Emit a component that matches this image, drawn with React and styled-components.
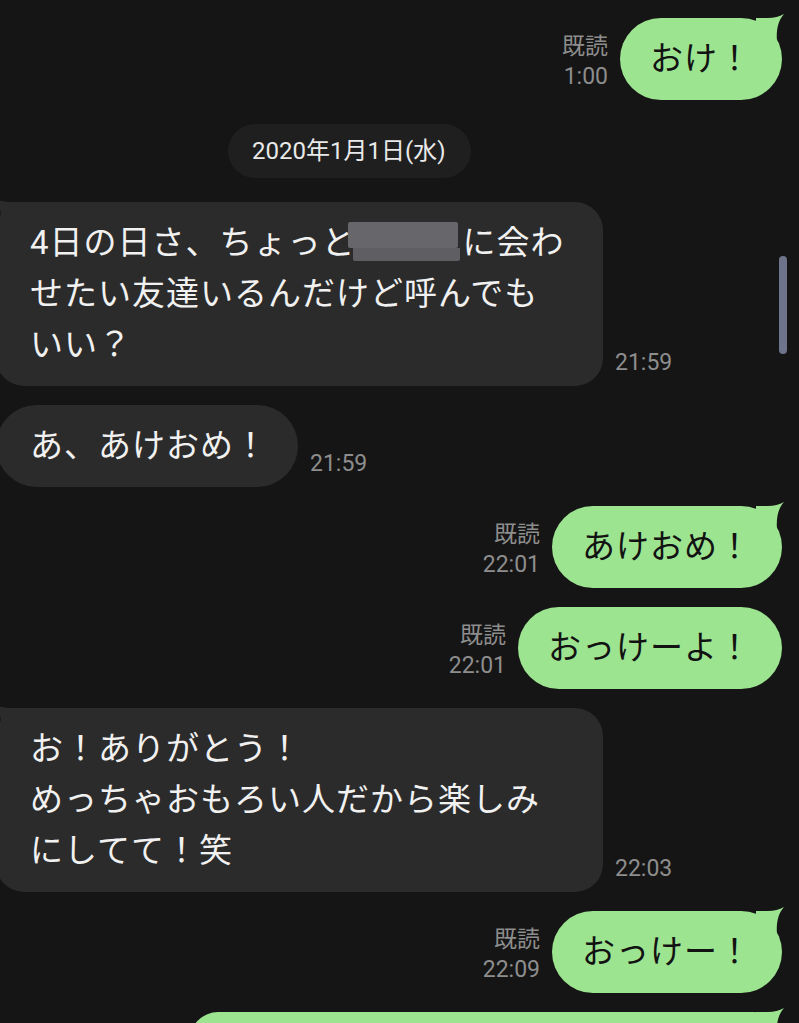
import React from 'react';
import styled, { createGlobalStyle, css } from 'styled-components';

const Global = createGlobalStyle`
  html, body { margin: 0; padding: 0; background: #151515; }
  body { font-family: Roboto, "Noto Sans CJK JP", sans-serif; }
`;

const Screen = styled.div`
  position: relative;
  width: 799px;
  height: 1023px;
  overflow: hidden;
  background: #151515;
  box-sizing: border-box;
  padding: 18px 17px 0 0;
  display: flex;
  flex-direction: column;
  gap: 19px;
`;

const Row = styled.div`
  display: flex;
  align-items: flex-end;
  gap: 12px;
  justify-content: ${p => (p.$mine ? 'flex-end' : 'flex-start')};
`;

const Bubble = styled.div`
  position: relative;
  flex: none;
  box-sizing: border-box;
  padding: 15px 30px 16px;
  border-radius: ${p => (p.$multi ? '28px' : '41px')};
  background: ${p => (p.$mine ? '#9de491' : '#2b2b2b')};
  color: ${p => (p.$mine ? '#121212' : '#f1f1f1')};
  font-family: Roboto, "Noto Sans CJK JP", sans-serif;
  font-size: 33px;
  line-height: 51px;
  letter-spacing: 1px;
  white-space: nowrap;
  ${p => !p.$mine && css`
    margin-left: -4px;
    padding-left: 34px;
  `}
  ${p => p.$width && css`
    width: ${p.$width}px;
  `}
`;

const Tail = styled.svg`
  position: absolute;
  top: -4px;
  width: 28px;
  height: 30px;
  ${p => (p.$mine
    ? css`right: -2px;`
    : css`left: -2px; transform: scaleX(-1);`)}
`;

const Meta = styled.div`
  display: flex;
  flex-direction: column;
  align-items: ${p => (p.$mine ? 'flex-end' : 'flex-start')};
  margin-bottom: 8px;
  font-family: Roboto, "Noto Sans CJK JP", sans-serif;
  font-size: 23px;
  line-height: 30px;
  color: #8d8d8d;
  white-space: nowrap;
`;

const DateRow = styled.div`
  display: flex;
  padding-left: 228px;
  margin: 5px 0;
`;

const DatePill = styled.div`
  height: 54px;
  padding: 0 25px 0 24px;
  border-radius: 27px;
  background: #1f1f1f;
  color: #e9e9e9;
  font-family: Roboto, "Noto Sans CJK JP", sans-serif;
  font-size: 24px;
  line-height: 54px;
`;

const Redact = styled.span`
  display: inline-flex;
  flex-direction: column;
  vertical-align: top;
  margin: 5px 2px 0 -8px;
  width: 113px;
`;

const RedactTop = styled.span`
  display: block;
  width: 110px;
  height: 26px;
  background: #67676b;
  border-radius: 2px;
`;

const RedactBottom = styled.span`
  display: block;
  margin-left: 5px;
  width: 107px;
  height: 13px;
  background: #5f5f63;
  border-radius: 0 0 2px 2px;
`;

const ScrollThumb = styled.div`
  position: absolute;
  left: 779px;
  top: 256px;
  width: 8px;
  height: 98px;
  border-radius: 4px;
  background: #6e758b;
`;

const TailShape = ({ mine }) => (
  <Tail $mine={mine} viewBox="0 0 28 30">
    <path d="M0 4 H12 Q21 4 28 0 C22 7 20 15 21 30 H0 Z" fill={mine ? '#9de491' : '#2b2b2b'} />
  </Tail>
);

const Sent = ({ time, tail, multi, width, children }) => (
  <Row $mine>
    {time && (
      <Meta $mine>
        <span>既読</span>
        <span>{time}</span>
      </Meta>
    )}
    <Bubble $mine $multi={multi} $width={width}>
      {tail && <TailShape mine />}
      {children}
    </Bubble>
  </Row>
);

const Received = ({ time, tail, multi, width, children }) => (
  <Row>
    <Bubble $multi={multi} $width={width}>
      {tail && <TailShape />}
      {children}
    </Bubble>
    <Meta>
      <span>{time}</span>
    </Meta>
  </Row>
);

export default function App() {
  return (
    <>
      <Global />
      <Screen>
        <Sent time="1:00" tail>おけ！</Sent>
        <DateRow>
          <DatePill>2020年1月1日(水)</DatePill>
        </DateRow>
        <Received time="21:59" tail multi width={607}>
          4日の日さ、ちょっと
          <Redact>
            <RedactTop />
            <RedactBottom />
          </Redact>
          に会わ
          <br />
          せたい友達いるんだけど呼んでも
          <br />
          いい？
        </Received>
        <Received time="21:59">あ、あけおめ！</Received>
        <Sent time="22:01" tail>あけおめ！</Sent>
        <Sent time="22:01">おっけーよ！</Sent>
        <Received time="22:03" tail multi width={607}>
          お！ありがとう！
          <br />
          めっちゃおもろい人だから楽しみ
          <br />
          にしてて！笑
        </Received>
        <Sent time="22:09" tail>おっけー！</Sent>
        <Sent tail multi width={592}>&nbsp;</Sent>
        <ScrollThumb />
      </Screen>
    </>
  );
}
